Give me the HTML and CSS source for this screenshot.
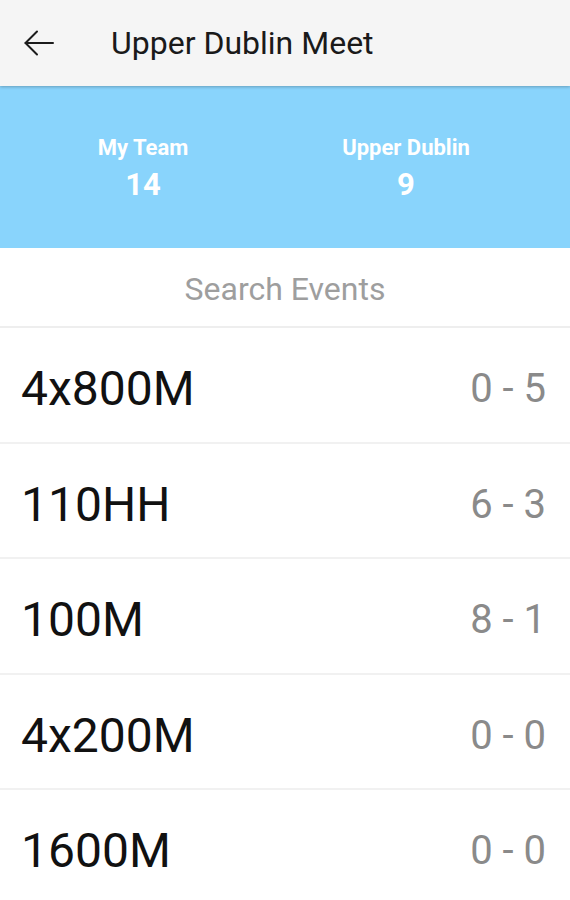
FILE: index.html
```html
<!DOCTYPE html>
<html lang="en">

<head>
    <meta charset="UTF-8">
    <meta name="viewport" content="width=device-width, initial-scale=1.0">
    <title>Upper Dublin Meet</title>
    <link rel="stylesheet" href="styles.css">
</head>

<body>
    <header class="toolbar">
        <button class="back" aria-label="Back">
            <svg width="32" height="26" viewBox="0 0 32 26" fill="none" xmlns="http://www.w3.org/2000/svg">
                <path d="M2.5 13H30" stroke="#1C1C1C" stroke-width="2" stroke-linecap="round" />
                <path d="M14 1.5L2.5 13L14 24.5" stroke="#1C1C1C" stroke-width="2" stroke-linecap="round"
                    stroke-linejoin="round" />
            </svg>
        </button>
        <h1>Upper Dublin Meet</h1>
    </header>

    <section class="scoreboard">
        <div class="team">
            <span class="team-name">My Team</span>
            <span class="team-score">14</span>
        </div>
        <div class="team">
            <span class="team-name">Upper Dublin</span>
            <span class="team-score">9</span>
        </div>
    </section>

    <div class="search">
        <input type="text" placeholder="Search Events">
    </div>

    <ul class="events">
        <li class="event"><span class="event-name">4x800M</span><span class="event-score">0 - 5</span></li>
        <li class="event"><span class="event-name">110HH</span><span class="event-score">6 - 3</span></li>
        <li class="event"><span class="event-name">100M</span><span class="event-score">8 - 1</span></li>
        <li class="event"><span class="event-name">4x200M</span><span class="event-score">0 - 0</span></li>
        <li class="event"><span class="event-name">1600M</span><span class="event-score">0 - 0</span></li>
    </ul>
</body>

</html>
```

FILE: styles.css
```css
* {
    font-family: Roboto, "Liberation Sans", sans-serif;
    box-sizing: border-box;
}

body {
    margin: 0;
    background-color: white;
    height: 900px;
    overflow: hidden;
}

.toolbar {
    position: relative;
    z-index: 1;
    display: flex;
    align-items: center;
    height: 86px;
    padding: 0 0 0 23px;
    background-color: #f5f5f5;
    box-shadow: 0 1px 3px rgba(0, 0, 0, 0.25);
}

.back {
    display: flex;
    padding: 0;
    border: none;
    background: none;
}

.toolbar h1 {
    margin: 0 0 0 56px;
    font-size: 32px;
    font-weight: 400;
    color: #1a1a1a;
}

.scoreboard {
    display: grid;
    grid-template-columns: 286px 240px;
    align-content: center;
    height: 162px;
    padding-top: 6px;
    background-color: #89d4fc;
}

.team {
    display: flex;
    flex-direction: column;
    align-items: center;
    color: white;
    font-weight: 700;
}

.team-name {
    font-size: 22px;
    line-height: 30px;
}

.team-score {
    font-size: 31px;
    line-height: 44px;
}

.search {
    height: 80px;
    border-bottom: 2px solid #eeeeee;
}

.search input {
    width: 100%;
    height: 100%;
    padding: 4px 0 0;
    border: none;
    outline: none;
    text-align: center;
    font-size: 32px;
    background: none;
}

.search input::placeholder {
    color: #9e9e9e;
}

.events {
    list-style: none;
    margin: 0;
    padding: 0;
}

.event {
    display: flex;
    justify-content: space-between;
    align-items: center;
    height: 115.5px;
    padding: 8px 24px 0 21px;
    border-bottom: 2px solid #f1f1f1;
}

.event-name {
    font-size: 48px;
    color: #111;
}

.event-score {
    font-size: 40px;
    color: #8a8a8a;
}
```
